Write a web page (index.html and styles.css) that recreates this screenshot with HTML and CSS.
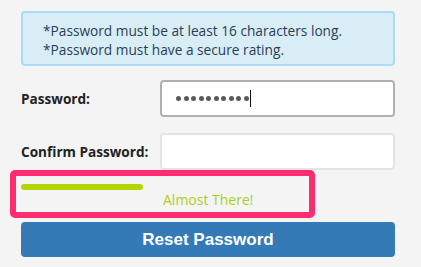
FILE: index.html
```html
<!DOCTYPE html>
<html lang="en">
<head>
<meta charset="utf-8">
<title>Reset Password</title>
<link rel="stylesheet" href="styles.css">
</head>
<body>
<main class="page">
  <div class="alert">
    <p>*Password must be at least 16 characters long.</p>
    <p>*Password must have a secure rating.</p>
  </div>
  <form class="form">
    <div class="row">
      <label class="label">Password:</label>
      <div class="field focused">
        <span class="dots"><i></i><i></i><i></i><i></i><i></i><i></i><i></i><i></i><i></i><i></i></span>
        <span class="caret"></span>
      </div>
    </div>
    <div class="row row-last">
      <label class="label">Confirm Password:</label>
      <div class="field"></div>
    </div>
    <div class="strength">
      <div class="bar"></div>
      <div class="strength-text">Almost There!</div>
      <div class="highlight"></div>
    </div>
    <button type="button" class="btn">Reset Password</button>
  </form>
</main>
</body>
</html>
```
FILE: styles.css
```css
html, body {
  margin: 0;
  padding: 0;
  background: #f4f4f4;
}
body {
  font-family: "Open Sans", "DejaVu Sans", sans-serif;
  color: #333;
}
.page {
  width: 374px;
  padding: 11px 0 0 21px;
}
.alert {
  box-sizing: border-box;
  height: 55px;
  background: #d9edf7;
  border: 2px solid #a9dcf6;
  border-radius: 4px;
  padding: 8px 0 0 20px;
  color: #263f55;
  font-size: 13.7px;
  line-height: 19px;
}
.alert p {
  margin: 0;
}
.form {
  margin-top: 14px;
}
.row {
  display: flex;
  align-items: center;
  height: 37px;
  margin-bottom: 16px;
}
.row-last { margin-bottom: 0; }
.label {
  width: 139px;
  font-weight: bold;
  font-size: 13.6px;
  color: #222;
}
.field {
  box-sizing: border-box;
  width: 235px;
  height: 37px;
  background: #fff;
  border: 2px solid #e4e4e4;
  border-radius: 4px;
  display: flex;
  align-items: center;
  padding-left: 14px;
}
.field.focused {
  border-color: #b0b0b0;
}
.dots {
  display: flex;
  gap: 2.5px;
}
.dots i {
  width: 5px;
  height: 5px;
  border-radius: 50%;
  background: #5a5a5a;
}
.caret {
  width: 1px;
  height: 17px;
  background: #111;
  margin-left: 1px;
}
.strength {
  position: relative;
  height: 52px;
  padding-top: 14px;
  box-sizing: border-box;
}
.bar {
  width: 122px;
  height: 6px;
  border-radius: 3px;
  background: #b6d500;
}
.strength-text {
  padding-left: 142px;
  margin-top: 1px;
  font-size: 14px;
  line-height: 18px;
  color: #b0cf14;
}
.highlight {
  position: absolute;
  left: -11px;
  top: 0;
  width: 305px;
  height: 48px;
  box-sizing: border-box;
  border: 6px solid #ff2d6f;
  border-radius: 5px;
}
.btn {
  display: block;
  width: 374px;
  height: 35px;
  border: 0;
  border-radius: 4px;
  background: #337ab7;
  color: #fff;
  font-family: "Liberation Sans", Arial, sans-serif;
  font-weight: bold;
  font-size: 17px;
  padding: 0;
}
```
